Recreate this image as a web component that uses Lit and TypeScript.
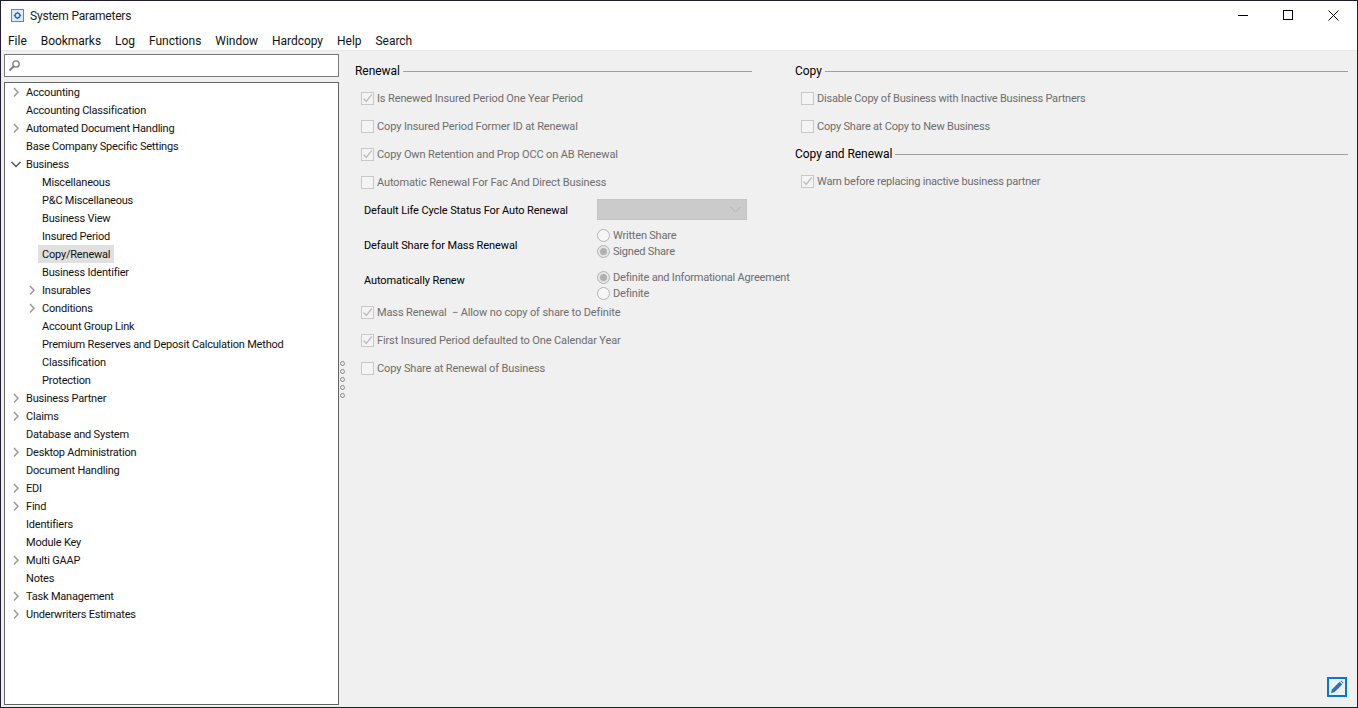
import { LitElement, html, css } from "lit";
import { customElement } from "lit/decorators.js";

type Node = { t: string; d: 0 | 1; a?: "r" | "d"; sel?: boolean };
const tree: Node[] = [
  { t: "Accounting", d: 0, a: "r" },
  { t: "Accounting Classification", d: 0 },
  { t: "Automated Document Handling", d: 0, a: "r" },
  { t: "Base Company Specific Settings", d: 0 },
  { t: "Business", d: 0, a: "d" },
  { t: "Miscellaneous", d: 1 },
  { t: "P&C Miscellaneous", d: 1 },
  { t: "Business View", d: 1 },
  { t: "Insured Period", d: 1 },
  { t: "Copy/Renewal", d: 1, sel: true },
  { t: "Business Identifier", d: 1 },
  { t: "Insurables", d: 1, a: "r" },
  { t: "Conditions", d: 1, a: "r" },
  { t: "Account Group Link", d: 1 },
  { t: "Premium Reserves and Deposit Calculation Method", d: 1 },
  { t: "Classification", d: 1 },
  { t: "Protection", d: 1 },
  { t: "Business Partner", d: 0, a: "r" },
  { t: "Claims", d: 0, a: "r" },
  { t: "Database and System", d: 0 },
  { t: "Desktop Administration", d: 0, a: "r" },
  { t: "Document Handling", d: 0 },
  { t: "EDI", d: 0, a: "r" },
  { t: "Find", d: 0, a: "r" },
  { t: "Identifiers", d: 0 },
  { t: "Module Key", d: 0 },
  { t: "Multi GAAP", d: 0, a: "r" },
  { t: "Notes", d: 0 },
  { t: "Task Management", d: 0, a: "r" },
  { t: "Underwriters Estimates", d: 0, a: "r" },
];
const menus = ["File", "Bookmarks", "Log", "Functions", "Window", "Hardcopy", "Help", "Search"];

@customElement("app-root")
export class AppRoot extends LitElement {
  static styles = css`
    :host { display: block; width: 1358px; height: 708px; font-family: Roboto, sans-serif; font-size: 11px; letter-spacing: -0.2px; color: #000; }
    * { box-sizing: border-box; }
    .win { width: 1358px; height: 708px; border: 1px solid #1e1e30; display: flex; flex-direction: column; background: #f0f0f0; overflow: hidden; }
    .title { height: 29px; flex: none; background: #fff; display: flex; align-items: center; padding-left: 10px; }
    .title .name { margin-left: 5px; color: #1a1a1a; font-size: 12px; letter-spacing: -0.2px; }
    .caps { margin-left: auto; display: flex; align-items: center; padding-right: 1px; }
    .cap { width: 45px; height: 29px; display: flex; align-items: center; justify-content: center; }
    .menu { height: 21px; flex: none; background: #fff; display: flex; align-items: center; padding-left: 7px; gap: 14px; border-bottom: 1px solid #e8e8e8; color: #111; font-size: 12px; letter-spacing: -0.03px; }
    .menu span { position: relative; top: 1px; }
    .body { flex: 1; display: flex; min-height: 0; }
    .left { width: 338px; flex: none; padding: 3px 0 2px 3px; display: flex; flex-direction: column; gap: 5px; }
    .search { height: 23px; flex: none; border: 1px solid #7a7a7a; background: #fff; display: flex; align-items: center; padding-left: 3px; }
    .tree { flex: 1; border: 1px solid #646464; background: #fff; }
    .row { height: 18px; display: flex; align-items: center; white-space: nowrap; color: #111; }
    .d0 { padding-left: 6px; }
    .d1 { padding-left: 22px; }
    .arrow { width: 10px; height: 18px; flex: none; display: flex; align-items: center; justify-content: center; margin-right: 5px; }
    .lbl { padding: 0 4px; height: 18px; line-height: 20px; margin-left: -4px; }
    .sel { background: #e0e0e0; }
    .grip { width: 16px; flex: none; display: flex; flex-direction: column; align-items: flex-start; padding: 310px 0 0 1px; gap: 3px; }
    .grip i { display: block; width: 5px; height: 5px; flex: none; border: 1px solid #8a8a8a; border-radius: 50%; background: #f0f0f0; }
    .main { flex: 1; display: flex; padding-top: 10px; position: relative; min-width: 0; }
    .col1 { width: 397px; flex: none; }
    .col2 { flex: 1; margin-left: 43px; margin-right: 9px; }
    .sect { display: flex; align-items: center; height: 20px; gap: 3px; white-space: nowrap; font-size: 12px; letter-spacing: -0.05px; }
    .sect::after { content: ""; flex: 1; height: 1px; background: #a0a0a0; }
    .sect.second { margin-top: 4px; }
    .chk { height: 28px; display: flex; align-items: center; padding-left: 6px; gap: 3px; color: #6d6d6d; white-space: nowrap; }
    .col1 .chk { letter-spacing: -0.12px; }
    .box { width: 13px; height: 13px; flex: none; border: 1px solid #c8c8c8; background: #f4f4f4; display: block; }
    .box svg { display: block; }
    .checks { margin-top: 3px; }
    .checks.flush { margin-top: 0; }
    .field { display: flex; align-items: center; padding-left: 9px; white-space: nowrap; letter-spacing: -0.1px; }
    .field .lab { width: 233px; flex: none; }
    .f-life { height: 28px; }
    .f-share { height: 35px; margin-top: 4px; }
    .f-share .radios { margin-top: -4px; }
    .f-auto { height: 35px; }
    .f-auto .radios { margin-top: 10px; }
    .combo { width: 150px; height: 21px; margin-top: -2px; background: #cbcbcb; border: 1px solid #c4c4c4; display: flex; align-items: center; justify-content: flex-end; padding-right: 5px; }
    .radios { display: flex; flex-direction: column; letter-spacing: -0.2px; }
    .radio { height: 16px; display: flex; align-items: center; gap: 3px; color: #6d6d6d; white-space: nowrap; }
    .dot { width: 13px; height: 13px; border-radius: 50%; border: 1px solid #b4b4b4; background: #f6f6f6; flex: none; display: flex; align-items: center; justify-content: center; }
    .dot.on { background: #e4e4e4; }
    .dot.on::after { content: ""; width: 7px; height: 7px; border-radius: 50%; background: #b0b0b0; }
    .edit { position: absolute; right: 10px; bottom: 10px; width: 20px; height: 20px; border: 2px solid #0078d7; display: flex; align-items: center; justify-content: center; }
  `;

  arrow(a?: "r" | "d") {
    if (a === "r") return html`<svg width="10" height="10" viewBox="0 0 10 10"><path d="M3 1 L7 5.2 L3 9.4" fill="none" stroke="#9a9a9a" stroke-width="1.5"/></svg>`;
    if (a === "d") return html`<svg width="10" height="10" viewBox="0 0 10 10"><path d="M.5 3 L5 7.5 L9.5 3" fill="none" stroke="#555" stroke-width="1.5"/></svg>`;
    return "";
  }

  chk(t: string, on = false) {
    return html`<div class="chk"><span class="box">${on ? html`<svg width="11" height="11" viewBox="0 0 11 11"><path d="M1.5 5.5 L4.2 8.4 L9.8 1.5" fill="none" stroke="#bcbcbc" stroke-width="1.3"/></svg>` : ""}</span><span>${t}</span></div>`;
  }

  radio(t: string, on = false) {
    return html`<div class="radio"><span class="dot ${on ? "on" : ""}"></span>${t}</div>`;
  }

  render() {
    return html`<div class="win">
      <div class="title">
        <svg width="14" height="14" viewBox="0 0 14 14">
          <rect x=".5" y=".5" width="12" height="12" fill="#dcebf7" stroke="#3f8fd2"/>
          <circle cx="6.5" cy="6.5" r="2.4" fill="none" stroke="#1f6fb5" stroke-width="1.4"/>
          <path d="M6.5 2.8v1.2M6.5 9v1.2M2.8 6.5H4M9 6.5h1.2" stroke="#1f6fb5"/>
        </svg>
        <span class="name">System Parameters</span>
        <div class="caps">
          <div class="cap"><svg width="11" height="11"><path d="M0 5.5h10" stroke="#000"/></svg></div>
          <div class="cap"><svg width="11" height="11"><rect x=".5" y=".5" width="9" height="9" fill="none" stroke="#000"/></svg></div>
          <div class="cap"><svg width="11" height="11"><path d="M.5 .5l10 10M10.5 .5l-10 10" stroke="#000" fill="none"/></svg></div>
        </div>
      </div>
      <div class="menu">${menus.map((m) => html`<span>${m}</span>`)}</div>
      <div class="body">
        <div class="left">
          <div class="search">
            <svg width="13" height="13" viewBox="0 0 13 13"><circle cx="8" cy="5" r="3.2" fill="none" stroke="#777" stroke-width="1.3"/><path d="M5.6 7.4 L1.5 11.5" stroke="#777" stroke-width="1.8"/></svg>
          </div>
          <div class="tree">
            ${tree.map((n) => html`<div class="row d${n.d}">
              <span class="arrow">${this.arrow(n.a)}</span>
              <span class="lbl ${n.sel ? "sel" : ""}">${n.t}</span>
            </div>`)}
          </div>
        </div>
        <div class="grip"><i></i><i></i><i></i><i></i><i></i></div>
        <div class="main">
          <div class="col1">
            <div class="sect">Renewal</div>
            <div class="checks">
              ${this.chk("Is Renewed Insured Period One Year Period", true)}
              ${this.chk("Copy Insured Period Former ID at Renewal")}
              ${this.chk("Copy Own Retention and Prop OCC on AB Renewal", true)}
              ${this.chk("Automatic Renewal For Fac And Direct Business")}
            </div>
            <div class="field f-life"><span class="lab">Default Life Cycle Status For Auto Renewal</span>
              <span class="combo"><svg width="11" height="7" viewBox="0 0 11 7"><path d="M.5 1 L5.5 6 L10.5 1" fill="none" stroke="#b0b0b0"/></svg></span></div>
            <div class="field f-share"><span class="lab">Default Share for Mass Renewal</span>
              <div class="radios">${this.radio("Written Share")}${this.radio("Signed Share", true)}</div></div>
            <div class="field f-auto"><span class="lab">Automatically Renew</span>
              <div class="radios">${this.radio("Definite and Informational Agreement", true)}${this.radio("Definite")}</div></div>
            <div class="checks flush">
              ${this.chk("Mass Renewal\u00a0 − Allow no copy of share to Definite", true)}
              ${this.chk("First Insured Period defaulted to One Calendar Year", true)}
              ${this.chk("Copy Share at Renewal of Business")}
            </div>
          </div>
          <div class="col2">
            <div class="sect">Copy</div>
            <div class="checks">
              ${this.chk("Disable Copy of Business with Inactive Business Partners")}
              ${this.chk("Copy Share at Copy to New Business")}
            </div>
            <div class="sect second">Copy and Renewal</div>
            <div class="checks">
              ${this.chk("Warn before replacing inactive business partner", true)}
            </div>
          </div>
          <div class="edit"><svg width="14" height="14" viewBox="0 0 14 14"><path d="M1 13 L1.8 9.6 L9.6 1.8 L12.2 4.4 L4.4 12.2 Z" fill="#2a73b8"/><path d="M10.4 1 L11.2 .4 L13.6 2.8 L13 3.6 Z" fill="#2a73b8"/></svg></div>
        </div>
      </div>
    </div>`;
  }
}
